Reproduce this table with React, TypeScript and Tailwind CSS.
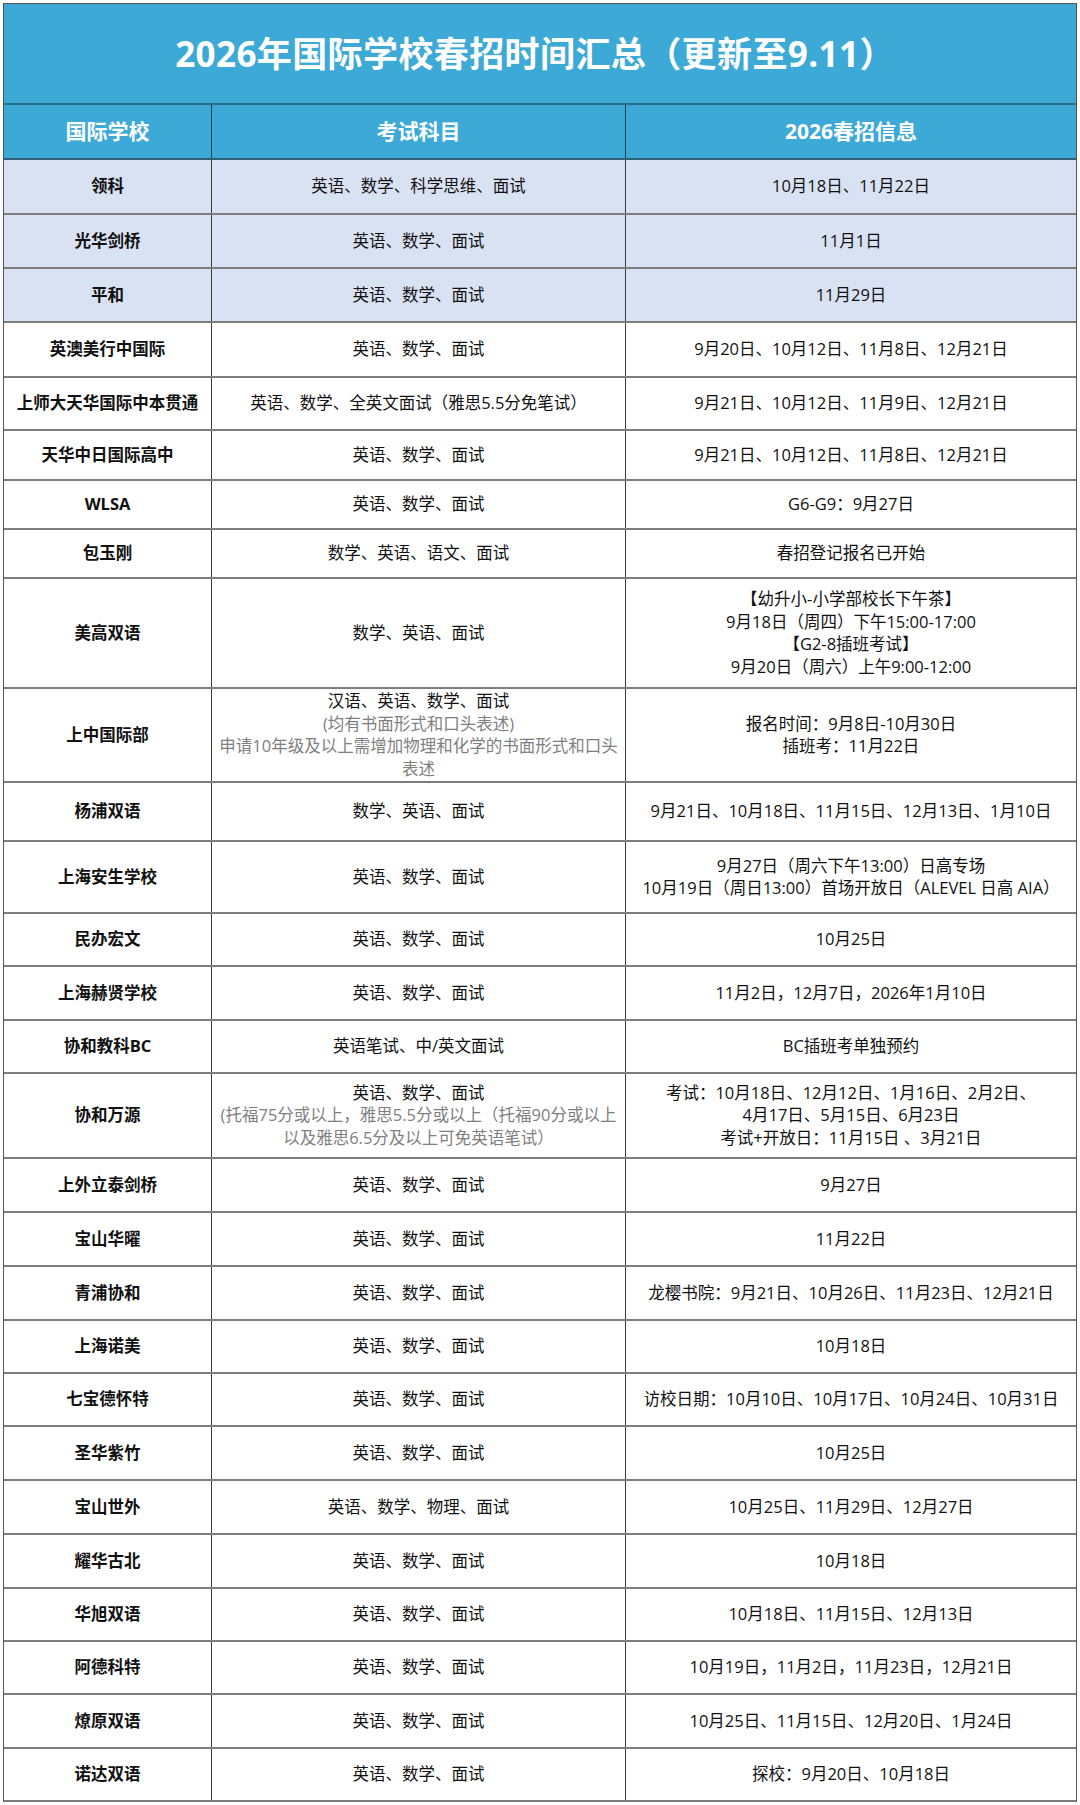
// 2026年国际学校春招时间汇总 — 表格截图还原

type Line = { t: string; gray?: boolean };

type Row = {
  name: string;
  h: string;
  blue?: boolean;
  subject: Line[];
  info: Line[];
};

const l = (t: string, gray?: boolean): Line => ({ t, gray });

const STD = [l("英语、数学、面试")];

const ROWS: Row[] = [
  { name: "领科", h: "h-[55px]", blue: true, subject: [l("英语、数学、科学思维、面试")], info: [l("10月18日、11月22日")] },
  { name: "光华剑桥", h: "h-[54px]", blue: true, subject: STD, info: [l("11月1日")] },
  { name: "平和", h: "h-[54px]", blue: true, subject: STD, info: [l("11月29日")] },
  { name: "英澳美行中国际", h: "h-[55px]", subject: STD, info: [l("9月20日、10月12日、11月8日、12月21日")] },
  {
    name: "上师大天华国际中本贯通",
    h: "h-[53px]",
    subject: [l("英语、数学、全英文面试（雅思5.5分免笔试）")],
    info: [l("9月21日、10月12日、11月9日、12月21日")],
  },
  { name: "天华中日国际高中", h: "h-[50px]", subject: STD, info: [l("9月21日、10月12日、11月8日、12月21日")] },
  { name: "WLSA", h: "h-[49px]", subject: STD, info: [l("G6-G9：9月27日")] },
  { name: "包玉刚", h: "h-[49px]", subject: [l("数学、英语、语文、面试")], info: [l("春招登记报名已开始")] },
  {
    name: "美高双语",
    h: "h-[110px]",
    subject: [l("数学、英语、面试")],
    info: [
      l("【幼升小-小学部校长下午茶】"),
      l("9月18日（周四）下午15:00-17:00"),
      l("【G2-8插班考试】"),
      l("9月20日（周六）上午9:00-12:00"),
    ],
  },
  {
    name: "上中国际部",
    h: "h-[94px]",
    subject: [
      l("汉语、英语、数学、面试"),
      l("(均有书面形式和口头表述)", true),
      l("申请10年级及以上需增加物理和化学的书面形式和口头", true),
      l("表述", true),
    ],
    info: [l("报名时间：9月8日-10月30日"), l("插班考：11月22日")],
  },
  {
    name: "杨浦双语",
    h: "h-[59px]",
    subject: [l("数学、英语、面试")],
    info: [l("9月21日、10月18日、11月15日、12月13日、1月10日")],
  },
  {
    name: "上海安生学校",
    h: "h-[72px]",
    subject: STD,
    info: [l("9月27日（周六下午13:00）日高专场"), l("10月19日（周日13:00）首场开放日（ALEVEL 日高 AIA）")],
  },
  { name: "民办宏文", h: "h-[53px]", subject: STD, info: [l("10月25日")] },
  { name: "上海赫贤学校", h: "h-[54px]", subject: STD, info: [l("11月2日，12月7日，2026年1月10日")] },
  { name: "协和教科BC", h: "h-[53px]", subject: [l("英语笔试、中/英文面试")], info: [l("BC插班考单独预约")] },
  {
    name: "协和万源",
    h: "h-[85px]",
    subject: [
      l("英语、数学、面试"),
      l("(托福75分或以上，雅思5.5分或以上（托福90分或以上", true),
      l("以及雅思6.5分及以上可免英语笔试）", true),
    ],
    info: [
      l("考试：10月18日、12月12日、1月16日、2月2日、"),
      l("4月17日、5月15日、6月23日"),
      l("考试+开放日：11月15日 、3月21日"),
    ],
  },
  { name: "上外立泰剑桥", h: "h-[54px]", subject: STD, info: [l("9月27日")] },
  { name: "宝山华曜", h: "h-[54px]", subject: STD, info: [l("11月22日")] },
  { name: "青浦协和", h: "h-[54px]", subject: STD, info: [l("龙樱书院：9月21日、10月26日、11月23日、12月21日")] },
  { name: "上海诺美", h: "h-[53px]", subject: STD, info: [l("10月18日")] },
  { name: "七宝德怀特", h: "h-[53px]", subject: STD, info: [l("访校日期：10月10日、10月17日、10月24日、10月31日")] },
  { name: "圣华紫竹", h: "h-[54px]", subject: STD, info: [l("10月25日")] },
  { name: "宝山世外", h: "h-[54px]", subject: [l("英语、数学、物理、面试")], info: [l("10月25日、11月29日、12月27日")] },
  { name: "耀华古北", h: "h-[54px]", subject: STD, info: [l("10月18日")] },
  { name: "华旭双语", h: "h-[53px]", subject: STD, info: [l("10月18日、11月15日、12月13日")] },
  { name: "阿德科特", h: "h-[53px]", subject: STD, info: [l("10月19日，11月2日，11月23日，12月21日")] },
  { name: "燎原双语", h: "h-[54px]", subject: STD, info: [l("10月25日、11月15日、12月20日、1月24日")] },
  { name: "诺达双语", h: "h-[53px]", subject: STD, info: [l("探校：9月20日、10月18日")] },
];

function Lines({ lines }: { lines: Line[] }) {
  return (
    <div className="flex flex-col items-center">
      {lines.map((ln, i) => (
        <span key={i} className={ln.gray ? "whitespace-nowrap text-[#7f7f7f]" : "whitespace-nowrap text-[#111]"}>
          {ln.t}
        </span>
      ))}
    </div>
  );
}

export default function App() {
  return (
    <div className="min-h-[1805px] w-[1080px] bg-white px-[3px] pt-[3px] font-['Open_Sans','Noto_Sans_CJK_SC',sans-serif]">
      <div className="w-[1074px] border-x border-t border-[#555]">
        {/* 标题 */}
        <div className="flex h-[101px] items-center justify-center border-b-2 border-[#2f6d86] bg-[#3da9d6] pt-[2px] pr-[10px]">
          <h1 className="text-[35px] font-bold tracking-[0.4px] text-white">2026年国际学校春招时间汇总（更新至9.11）</h1>
        </div>

        {/* 表头 */}
        <div className="grid h-[55px] grid-cols-[208px_414px_1fr] border-b-2 border-[#2f5f74] bg-[#3da9d6] text-[21px] font-bold text-white">
          <div className="flex items-center justify-center border-r border-[#1f3f4d]">国际学校</div>
          <div className="flex items-center justify-center border-r border-[#1f3f4d]">考试科目</div>
          <div className="flex items-center justify-center">2026春招信息</div>
        </div>

        {/* 数据行 */}
        {ROWS.map((r) => (
          <div
            key={r.name}
            className={`grid grid-cols-[208px_414px_1fr] border-b-2 border-[#7d7d7d] text-[16.5px] leading-[22.5px] ${r.h} ${
              r.blue ? "bg-[#d9e2f3]" : "bg-white"
            }`}
          >
            <div className="flex items-center justify-center border-r border-[#3a3a3a] font-bold text-[#111]">
              {r.name}
            </div>
            <div className="flex items-center justify-center border-r border-[#3a3a3a] text-center">
              <Lines lines={r.subject} />
            </div>
            <div className="flex items-center justify-center text-center">
              <Lines lines={r.info} />
            </div>
          </div>
        ))}
      </div>
    </div>
  );
}
